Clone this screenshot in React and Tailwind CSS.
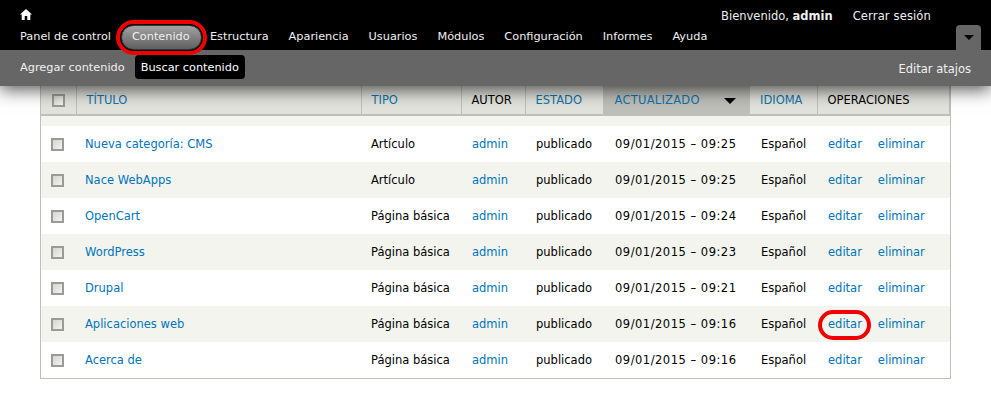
import React from 'react';

const MENU = ['Estructura', 'Apariencia', 'Usuarios', 'Módulos', 'Configuración', 'Informes', 'Ayuda'];

const ROWS = [
  ['Nueva categoría: CMS', 'Artículo', '09/01/2015 – 09:25'],
  ['Nace WebApps', 'Artículo', '09/01/2015 – 09:25'],
  ['OpenCart', 'Página básica', '09/01/2015 – 09:24'],
  ['WordPress', 'Página básica', '09/01/2015 – 09:23'],
  ['Drupal', 'Página básica', '09/01/2015 – 09:21'],
  ['Aplicaciones web', 'Página básica', '09/01/2015 – 09:16'],
  ['Acerca de', 'Página básica', '09/01/2015 – 09:16'],
];

const HEADERS = [
  { label: 'TÍTULO', link: true, width: 'w-[285px]' },
  { label: 'TIPO', link: true, width: 'w-[100px]' },
  { label: 'AUTOR', width: 'w-[64px]' },
  { label: 'ESTADO', link: true, width: 'w-[78px]' },
  { label: 'ACTUALIZADO', link: true, active: true, width: 'w-[147px]' },
  { label: 'IDIOMA', link: true, width: 'w-[67px]' },
  { label: 'OPERACIONES', width: '' },
];

const Checkbox = () => (
  <span className="block w-[13px] h-[13px] border-2 border-[#9a9a96] bg-gradient-to-br from-[#d4d4d0] to-[#f4f4f2]" />
);

const App = () => (
  <div className="relative w-[991px] h-[400px] overflow-hidden bg-white text-[11.5px] text-black font-['DejaVu_Sans',sans-serif]">
    <div className="relative z-10 shadow-[0_4px_16px_rgba(0,0,0,0.65)]">
      <div className="relative h-[50px] bg-black text-white">
        <div className="flex justify-end gap-[20px] pt-[9px] pr-[60px] h-[25px] leading-[14px] text-[#f0f0f0]">
          <span>Bienvenido, <b>admin</b></span>
          <span className="tracking-[0.15px]">Cerrar sesión</span>
        </div>
        <svg className="absolute left-[20px] top-[9px]" width="12" height="11" viewBox="0 0 12 11" fill="white">
          <path d="M6 0 L12 5.5 L10.3 5.5 L10.3 11 L7.3 11 L7.3 7 L4.7 7 L4.7 11 L1.7 11 L1.7 5.5 L0 5.5 Z" />
        </svg>
        <div className="flex items-center h-[21px] pl-[20px] pt-[2px] leading-[14px] text-[11.3px] text-[#f0f0f0]">
          <span>Panel de control</span>
          <span className="relative ml-[21px] mr-[20px] w-[58px]">
            <span className="absolute left-[-16px] right-[-17px] top-[-10px] bottom-[-11px] rounded-full border-[4px] border-[#f00000] bg-black p-[1px]">
              <span className="block h-full rounded-full border border-[#333333] bg-gradient-to-b from-[#a4a4a4] to-[#5f5f5f]" />
            </span>
            <span className="relative">Contenido</span>
          </span>
          <span className="flex gap-[20px]">
            {MENU.map((m) => (
              <span key={m}>{m}</span>
            ))}
          </span>
        </div>
        <div className="absolute left-[956px] top-[25px] w-[25px] h-[25px] rounded-t-[4px] bg-[#666666] flex items-center justify-center">
          <span className="w-0 h-0 border-x-[5px] border-x-transparent border-t-[5px] border-t-black" />
        </div>
      </div>
      <div className="flex items-start justify-between h-[36px] bg-[#666666] pt-[5px] pl-[20px] pr-[20px] text-[11.3px] text-[#f0f0f0]">
        <div className="flex items-center gap-[10px]">
          <span className="pt-[3px]">Agregar contenido</span>
          <span className="h-[24px] px-[6px] pt-[1px] leading-[24px] rounded-[4px] bg-black text-white">Buscar contenido</span>
        </div>
        <span className="pt-[6px] text-[11.5px]">Editar atajos</span>
      </div>
    </div>

    <div className="mx-[40px] w-[911px] border-x border-b border-[#bebfb9]">
      <table className="w-full border-collapse table-fixed">
        <thead>
          <tr className="h-[29px] border-b-2 border-[#bebfb9] text-left font-normal">
            <th className="w-[35px] pl-[11px] bg-[#e1e2dc] border-r border-[#bebfb9]">
              <Checkbox />
            </th>
            {HEADERS.map((h) => (
              <th
                key={h.label}
                className={`${h.width} pl-[10px] pt-[2px] font-normal ${h.active ? 'bg-[#bebfb9]' : 'bg-[#e1e2dc] border-r border-[#bebfb9]'} ${h.link ? 'text-[#0f74ad]' : 'text-black'}`}
              >
                <span className="flex items-center justify-between pr-[14px]">
                  <span className={h.active ? 'ml-[1px] tracking-[0.25px]' : ''}>{h.label}</span>
                  {h.active && <span className="w-0 h-0 border-x-[6px] border-x-transparent border-t-[6px] border-t-black" />}
                </span>
              </th>
            ))}
          </tr>
        </thead>
        <tbody>
          <tr className="h-[11px] bg-[#f3f4ee]">
            <td colSpan={8} />
          </tr>
          {ROWS.map((r, i) => (
            <tr key={r[0]} className={`h-[36px] ${i % 2 ? 'bg-[#f3f4ee]' : 'bg-white'}`}>
              <td className="pl-[10px]">
                <Checkbox />
              </td>
              <td className="pl-[9px] pt-[2px] text-[#0074bd]">{r[0]}</td>
              <td className="pl-[10px] pt-[2px]">{r[1]}</td>
              <td className="pl-[11px] pt-[2px] text-[#0074bd]">admin</td>
              <td className="pl-[11px] pt-[2px]">publicado</td>
              <td className="pl-[12px] pt-[2px] tracking-[0.5px]">{r[2]}</td>
              <td className="pl-[11px] pt-[2px]">Español</td>
              <td className="pl-[11px] pt-[2px] text-[#0074bd]">
                <span className="flex gap-[16px]">
                  <span className="relative">
                    editar
                    {r[0] === 'Aplicaciones web' && (
                      <span className="absolute left-[-10px] right-[-9px] top-[-6px] bottom-[-6px] rounded-full border-[4px] border-[#f00000]" />
                    )}
                  </span>
                  <span>eliminar</span>
                </span>
              </td>
            </tr>
          ))}
        </tbody>
      </table>
    </div>
  </div>
);

export default App;
